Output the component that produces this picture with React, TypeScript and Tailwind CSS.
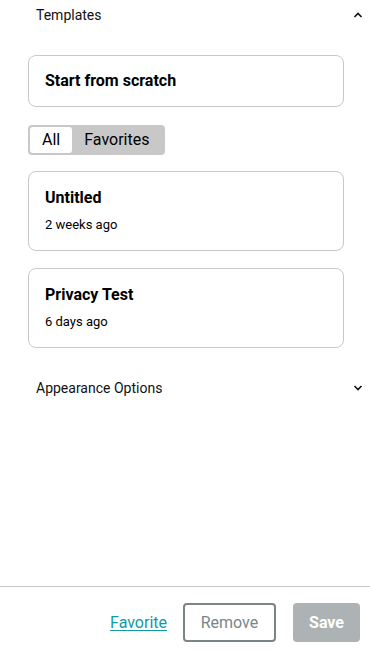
import React from "react";

const Chevron: React.FC<{ up?: boolean }> = ({ up }) => (
  <svg width="10" height="6" viewBox="0 0 10 6" className={up ? "" : "rotate-180"}>
    <path d="M1.5 5 L5 1.5 L8.5 5" fill="none" stroke="#111" strokeWidth="1.6" />
  </svg>
);

const TemplateCard: React.FC<{ title: string; sub: string }> = ({ title, sub }) => (
  <div className="rounded-lg border border-[#c8c8c8] px-4 pt-4 pb-[16px]">
    <div className="text-[16px] leading-5 font-bold text-black">{title}</div>
    <div className="mt-2 text-[13px] leading-[18px] text-black">{sub}</div>
  </div>
);

export default function App() {
  return (
    <div className="h-[652px] w-[370px] flex flex-col bg-white" style={{ fontFamily: "Roboto, 'Noto Sans', sans-serif" }}>
      <div className="flex-1">
        <div className="flex h-[30px] items-center justify-between pl-9 pr-[7px]">
          <span className="text-[14px] text-[#111]">Templates</span>
          <Chevron up />
        </div>

        <div className="pl-7 pr-[26px]">
          <div className="mt-[25px] flex h-[52px] items-center rounded-lg border border-[#c8c8c8] px-4">
            <span className="text-[16px] font-bold text-black">Start from scratch</span>
          </div>

          <div className="mt-[18px] inline-flex h-[30px] items-stretch rounded bg-[#c8c8c8] p-[2px]">
            <div className="flex items-center rounded-[3px] bg-white px-[12px] text-[16px] text-black">All</div>
            <div className="flex items-center pl-[12px] pr-[14px] text-[16px] text-black">Favorites</div>
          </div>

          <div className="mt-[16px] flex flex-col gap-[17px]">
            <TemplateCard title="Untitled" sub="2 weeks ago" />
            <TemplateCard title="Privacy Test" sub="6 days ago" />
          </div>
        </div>

        <div className="mt-[25px] flex h-[30px] items-center justify-between pl-9 pr-[7px]">
          <span className="text-[14px] text-[#111]">Appearance Options</span>
          <Chevron />
        </div>
      </div>

      <div className="h-[66px] border-t border-[#c8c8c8] pt-[16px] pr-[10px]">
        <div className="flex items-center justify-end">
          <a className="mr-4 text-[16px] text-[#0f9aa6] underline underline-offset-2">Favorite</a>
          <button className="h-[39px] w-[93px] rounded border-2 border-[#7b8587] text-[16px] text-[#7b8587]">Remove</button>
          <button className="ml-[17px] h-[39px] w-[67px] rounded bg-[#adb3b4] text-[16px] font-bold text-white">Save</button>
        </div>
      </div>
    </div>
  );
}
